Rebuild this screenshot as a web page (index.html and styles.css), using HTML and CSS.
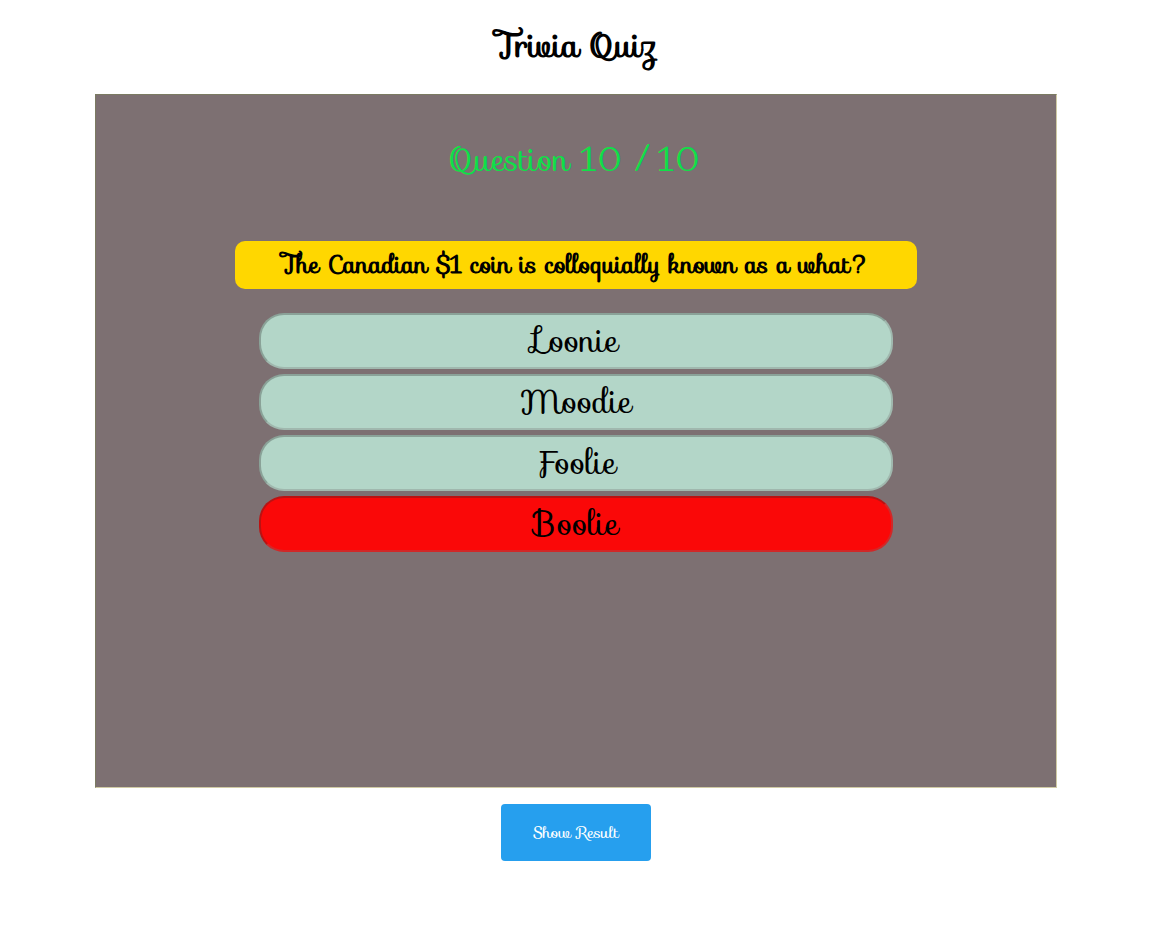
FILE: index.html
```html
<!DOCTYPE html>
<html lang="en">
<head>
<meta charset="utf-8">
<meta name="viewport" content="width=device-width, initial-scale=1">
<title>Trivia Quiz</title>
<link rel="stylesheet" href="styles.css">
</head>
<body>
<main class="page">
  <h1 class="title">Trivia Quiz</h1>
  <section class="panel">
    <p class="counter">Question 10 / 10</p>
    <h2 class="question">The Canadian $1 coin is colloquially known as a what?</h2>
    <div class="answers">
      <button type="button" class="answer">Loonie</button>
      <button type="button" class="answer">Moodie</button>
      <button type="button" class="answer">Foolie</button>
      <button type="button" class="answer answer-wrong">Boolie</button>
    </div>
  </section>
  <button type="button" class="result">Show Result</button>
</main>
</body>
</html>
```
FILE: styles.css
```css
* {
  box-sizing: border-box;
}

body {
  margin: 0;
  background: #fff;
  color: #000;
  font-family: "Sofia", "Lato", cursive;
}

button {
  font-family: inherit;
  cursor: pointer;
}

.page {
  display: flex;
  flex-direction: column;
  align-items: center;
  padding: 24px 117px 24px 95px;
}

.title {
  margin: 0 0 26px;
  font-size: 32px;
  line-height: 44px;
  font-weight: 700;
}

.panel {
  display: flex;
  flex-direction: column;
  align-items: center;
  width: 100%;
  max-width: 962px;
  min-height: 694px;
  padding: 40px 24px;
  background: #7d7072;
  border: 1px solid;
  border-color: #7b7b62 #d0cba5 #d0cba5 #7b7b62;
}

.counter {
  margin: 0 0 56px;
  color: #10df48;
  font-size: 32px;
  line-height: 50px;
}

.question {
  width: 100%;
  max-width: 682px;
  margin: 0 0 24px;
  padding: 6px 24px;
  border-radius: 10px;
  background: #ffd700;
  font-size: 24px;
  line-height: 36px;
  font-weight: 700;
  text-align: center;
}

.answers {
  display: grid;
  gap: 5px;
  width: 100%;
  max-width: 634px;
}

.answer {
  padding: 4px 24px;
  border: 2px solid;
  border-color: rgba(44, 44, 44, 0.3) rgba(118, 118, 118, 0.3) rgba(118, 118, 118, 0.3) rgba(44, 44, 44, 0.3);
  border-radius: 25px;
  background: #b3d6c8;
  color: #000;
  font-size: 32px;
  line-height: 44px;
}

.answer-wrong {
  background: #fa0808;
}

.result {
  margin-top: 16px;
  padding: 16px 32px;
  border: 0;
  border-radius: 4px;
  background: #269fee;
  color: #fff;
  font-size: 16px;
  line-height: 25px;
}
```
